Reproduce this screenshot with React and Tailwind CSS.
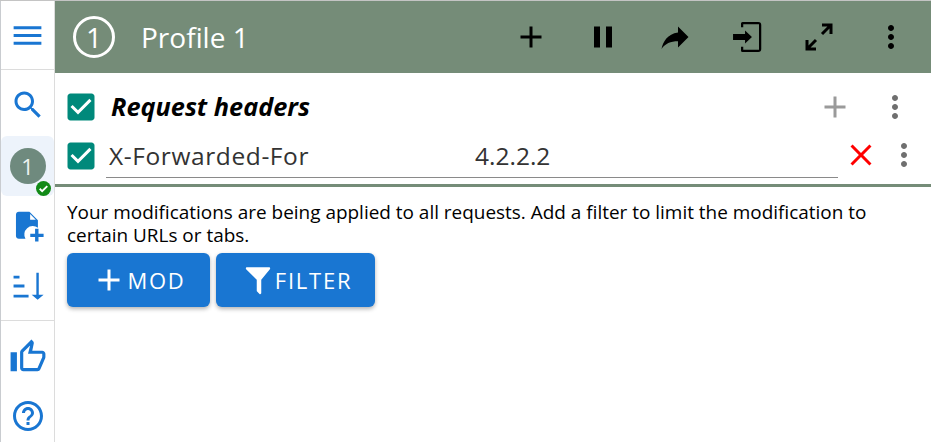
const Icon = ({ d, className = '', fill = 'currentColor' }) => (
  <svg viewBox="0 0 24 24" fill={fill} className={className}>
    <path d={d} />
  </svg>
);

const paths = {
  menu: 'M3 18h18v-2H3v2zm0-5h18v-2H3v2zm0-7v2h18V6H3z',
  search: 'M15.5 14h-.79l-.28-.27C15.41 12.59 16 11.11 16 9.5 16 5.91 13.09 3 9.5 3S3 5.91 3 9.5 5.91 16 9.5 16c1.61 0 3.09-.59 4.23-1.57l.27.28v.79l5 4.99L20.49 19l-4.99-5zm-6 0C7.01 14 5 11.99 5 9.5S7.01 5 9.5 5 14 7.01 14 9.5 11.99 14 9.5 14z',
  checkbox: 'M19 3H5c-1.11 0-2 .9-2 2v14c0 1.1.89 2 2 2h14c1.11 0 2-.9 2-2V5c0-1.1-.89-2-2-2zm-9 14l-5-5 1.41-1.41L10 14.17l7.59-7.59L19 8l-9 9z',
  add: 'M19 13h-6v6h-2v-6H5v-2h6V5h2v6h6v2z',
  pause: 'M6 19h4V5H6v14zm8-14v14h4V5h-4z',
  forward: 'M14 9V5l7 7-7 7v-4.1c-5 0-8.5 1.6-11 5.1 1-5 4-10 11-11z',
  more: 'M12 8c1.1 0 2-.9 2-2s-.9-2-2-2-2 .9-2 2 .9 2 2 2zm0 2c-1.1 0-2 .9-2 2s.9 2 2 2 2-.9 2-2-.9-2-2-2zm0 6c-1.1 0-2 .9-2 2s.9 2 2 2 2-.9 2-2-.9-2-2-2z',
  close: 'M19 6.41 17.59 5 12 10.59 6.41 5 5 6.41 10.59 12 5 17.59 6.41 19 12 13.41 17.59 19 19 17.59 13.41 12z',
  thumb: 'M9 21h9c.83 0 1.54-.5 1.84-1.22l3.02-7.05c.09-.23.14-.47.14-.73v-2c0-1.1-.9-2-2-2h-6.31l.95-4.57.03-.32c0-.41-.17-.79-.44-1.06L14.17 1 7.58 7.59C7.22 7.95 7 8.45 7 9v10c0 1.1.9 2 2 2zM9 9l4.34-4.34L12 10h9v2l-3 7H9V9zM1 9h4v12H1z',
  help: 'M11 18h2v-2h-2v2zm1-16C6.48 2 2 6.48 2 12s4.48 10 10 10 10-4.48 10-10S17.52 2 12 2zm0 18c-4.41 0-8-3.59-8-8s3.59-8 8-8 8 3.59 8 8-3.59 8-8 8zm0-14c-2.21 0-4 1.79-4 4h2c0-1.1.9-2 2-2s2 .9 2 2c0 2-3 1.75-3 5h2c0-2.25 3-2.5 3-5 0-2.21-1.79-4-4-4z',
  input: 'M9 2h10.5a2 2 0 0 1 2 2v16a2 2 0 0 1-2 2H9a1 1 0 0 1-1-1v-2.5h1.5v2H20V3.5H9.5v2H8V3a1 1 0 0 1 1-1zM2.7 10h8V7.7l4.6 4.3-4.6 4.3V14h-8v-4z',
  expand: 'M14 3h7v7h-2V6.4l-4.3 4.3-1.4-1.4L17.6 5H14V3zM3 14h2v3.6l4.3-4.3 1.4 1.4L6.4 19H10v2H3v-7z',
  noteAdd: 'M5.5 2H13l6 6v5.2a6 6 0 0 0-8.8 7.8H5.5c-1.1 0-2-.9-2-2V4c0-1.1.9-2 2-2zM13.5 3.5V7.5h4L13.5 3.5zM17 14h2.4v3.4H23v2.4h-3.6V23H17v-3.2h-3.4v-2.4H17V14z',
  sort: 'M1.8 4H6v2H1.8V4zm0 6.3h7.7v2H1.8v-2zm0 7.1h10.6v2H1.8v-2zM17.9 2h1.7v15.5H23L18.8 21l-4.2-3.5h3.3V2z',
  filter: 'M3.2 1h17.6c.8 0 1.2.9.7 1.5L14.6 11v10.6c0 .8-.9 1.2-1.4.7l-1.9-1.9c-.2-.2-.3-.4-.3-.7V11L2.5 2.5C2 1.9 2.4 1 3.2 1z',
};

const SideButton = ({ d, className = '' }) => (
  <div className={`flex items-center justify-center text-[#1976d2] ${className}`}>
    <Icon d={d} className="size-[36px]" />
  </div>
);

const HeaderButton = ({ d, size = 'size-[36px]' }) => (
  <button className="w-[72px] flex items-center justify-center text-black">
    <Icon d={d} className={size} />
  </button>
);

const Checkbox = () => <Icon d={paths.checkbox} className="size-[36px] text-[#00897b] shrink-0" />;

export default function App() {
  return (
    <div className="w-[931px] h-[442px] flex overflow-hidden bg-white text-black border-t border-[#c4c4c4] font-['Open_Sans','Noto_Sans',sans-serif]">
      <aside className="w-[55px] h-full flex flex-col shrink-0 border-r border-[#dcdcdc] border-l border-l-[#c9ccd0]">
        <div className="h-[69px] flex items-center justify-center border-b border-[#dcdcdc]">
          <Icon d={paths.menu} className="text-[#1976d2] size-[37px]" />
        </div>
        <SideButton d={paths.search} className="h-[66px] pt-1" />
        <div className="h-[60px] relative flex items-center justify-center bg-[#edf3fb] rounded-md">
          <div className="size-9 rounded-full bg-[#6f8a7e] text-[#eef3f0] flex items-center justify-center text-[22px]">1</div>
          <div className="absolute right-[3px] bottom-0 size-[15px] rounded-full bg-[#128a17] flex items-center justify-center">
            <svg viewBox="0 0 24 24" className="size-[13px]" fill="none" stroke="white" strokeWidth="3.4">
              <path d="M5 12.5l4.5 4.5L19 7.5" />
            </svg>
          </div>
        </div>
        <div className="h-[60px] flex items-center justify-center text-[#1976d2]">
          <Icon d={paths.noteAdd} className="size-[34px]" />
        </div>
        <div className="h-[65px] pb-[3px] flex items-center justify-center border-b border-[#dcdcdc] text-[#1976d2]">
          <Icon d={paths.sort} className="size-[34px]" />
        </div>
        <div className="h-[71px] flex items-center justify-center text-[#1976d2]">
          <Icon d={paths.thumb} className="size-[38px]" />
        </div>
        <div className="flex-1 pt-[6px] flex items-start justify-center text-[#1976d2]">
          <Icon d={paths.help} className="size-[36px]" />
        </div>
      </aside>
      <main className="flex-1 min-w-0 flex flex-col">
        <header className="h-[72px] bg-[#758c78] flex items-center pl-[18px]">
          <div className="size-[42px] rounded-full border-[3px] border-white text-white flex items-center justify-center text-[28px] shrink-0">1</div>
          <span className="ml-[26px] text-white text-[28px] leading-none">Profile 1</span>
          <div className="ml-auto flex items-center pr-[4px]">
            <HeaderButton d={paths.add} />
            <HeaderButton d={paths.pause} />
            <HeaderButton d={paths.forward} />
            <HeaderButton d={paths.input} />
            <HeaderButton d={paths.expand} />
            <HeaderButton d={paths.more} />
          </div>
        </header>
        <section className="h-[67px] flex items-center pl-[8px] pr-[18px]">
          <Checkbox />
          <h2 className="ml-[12px] text-[25.3px] font-bold italic leading-none">Request headers</h2>
          <Icon d={paths.add} className="ml-auto size-[36px] text-[#9a9a9a]" />
          <Icon d={paths.more} className="ml-[24px] size-[36px] text-[#6f6f6f]" />
        </section>
        <section className="h-[47px] w-[870px] -mt-[3px] flex items-start pl-[8px] border-b-[3px] border-[#758c78] box-content">
          <div className="pt-px"><Checkbox /></div>
          <div className="ml-[7px] w-[732px] h-[41px] pb-px border-b border-[#8a8a8a] flex items-center text-[#333] text-[24.5px] leading-none shrink-0">
            <span className="pl-[3px] w-[369px] tracking-[0.6px]">X-Forwarded-For</span>
            <span>4.2.2.2</span>
          </div>
          <Icon d={paths.close} className="ml-[5px] size-[36px] text-[#ff0000] shrink-0" />
          <Icon d={paths.more} className="ml-[7px] size-[36px] text-[#6f6f6f] shrink-0" />
        </section>
        <p className="mt-[14px] ml-[12px] w-[850px] text-[18.95px] leading-[23px]">
          Your modifications are being applied to all requests. Add a filter to limit the modification to certain URLs or tabs.
        </p>
        <div className="mt-[6px] ml-[12px] flex gap-[6px]">
          <button className="w-[143px] h-[54px] rounded-md bg-[#1976d2] text-white flex items-center justify-center text-[22px] tracking-[0.08em] font-medium shadow-[0_2px_4px_rgba(0,0,0,0.3)]">
            <Icon d={paths.add} className="size-[36px]" />MOD
          </button>
          <button className="w-[159px] h-[54px] pl-1 rounded-md bg-[#1976d2] text-white flex items-center justify-center text-[22px] tracking-[0.08em] font-medium shadow-[0_2px_4px_rgba(0,0,0,0.3)]">
            <Icon d={paths.filter} className="size-[30px] mr-[2px] mt-[2px]" />FILTER
          </button>
        </div>
      </main>
    </div>
  );
}
